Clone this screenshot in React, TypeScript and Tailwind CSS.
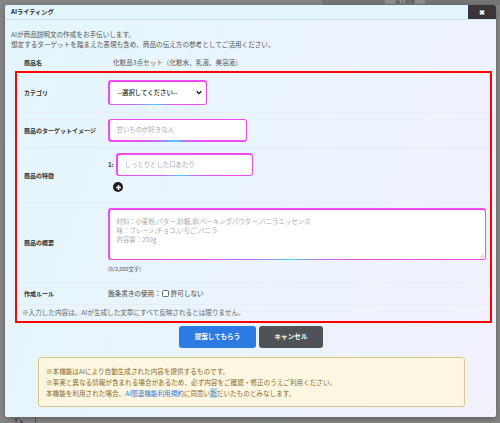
import React from "react";

const gradBorder =
  "bg-[conic-gradient(from_0deg,#f04af0_0deg,#f04af0_110deg,#b07cf8_150deg,#3fdcf0_195deg,#9a8cf6_230deg,#f04af0_260deg,#f04af0_360deg)] p-[1.5px] rounded-[3px]";

export default function App() {
  return (
    <div className="relative w-[500px] h-[423px] overflow-hidden bg-[#868686] font-['Noto_Sans_CJK_JP','Noto_Sans',sans-serif]">
      {/* page behind the overlay */}
      <div className="absolute left-[322px] top-0 w-[178px] h-[5px] bg-[#767676]" />
      <div className="absolute left-[385px] top-[-3px] w-[40px] h-[7px] bg-[#8e8e8e] text-[5px] text-[#444] text-center leading-[7px]">
        施工画像
      </div>
      <div className="absolute left-[35px] top-[417px] w-px h-[6px] bg-[#5a5a5a]" />
      <div className="absolute left-[14px] top-[417px] text-[6px] font-bold text-[#2a2a2a] leading-[8px]">
        ﾌﾟﾚ
      </div>

      {/* modal */}
      <div className="absolute left-[5px] top-[5px] w-[491px] h-[412px] flex flex-col shadow-[0_2px_6px_rgba(0,0,0,0.3)] rounded-[2px] overflow-hidden">
        <div className="h-[15px] shrink-0 flex items-stretch justify-between bg-[#e2f5fc] border-b border-[#cfe0e6]">
          <div className="pl-[6px] flex items-center text-[6.2px] font-bold text-[#222]">
            AIライティング
          </div>
          <div className="w-[28px] bg-[#3b3539] flex items-center justify-center text-white text-[7px] font-bold leading-none">
            ✖
          </div>
        </div>

        <div className="flex-1 flex flex-col bg-[linear-gradient(110deg,#e3f6fc_0%,#eaf4fc_45%,#f1f1fc_100%)] pl-[6px] pr-[4px]">
          <div className="pt-[9px] text-[6.6px] leading-[10px] text-[#555]">
            <div>AIが商品説明文の作成をお手伝いします。</div>
            <div>想定するターゲットを踏まえた表現も含め、商品の伝え方の参考としてご活用ください。</div>
          </div>

          <div className="mt-[7px] ml-[4px] h-[13px] flex items-center">
            <div className="w-[98px] pl-[9px] text-[6px] font-bold text-[#333]">商品名</div>
            <div className="text-[6.6px] text-[#555]">化粧品3点セット（化粧水、乳液、美容液）</div>
          </div>

          <div className="mt-[2px] ml-[4px] border-2 border-[#ff0000] flex flex-col">
            {/* category */}
            <div className="h-[40px] flex items-center border-b border-[#e6edf3]">
              <div className="w-[91px] pl-[7px] text-[6px] font-bold text-[#333]">カテゴリ</div>
              <div className={`${gradBorder} w-[99px] h-[25px]`}>
                <div className="w-full h-full bg-white rounded-[2px] flex items-center justify-between pl-[8px] pr-[4px]">
                  <span className="text-[6.4px] font-medium text-[#222]">--選択してください--</span>
                  <svg width="6" height="5" viewBox="0 0 6 5">
                    <path d="M0.8 1.2 L3 3.6 L5.2 1.2" fill="none" stroke="#111" strokeWidth="1.3" />
                  </svg>
                </div>
              </div>
            </div>

            {/* target */}
            <div className="h-[35px] flex items-center border-b border-[#e6edf3]">
              <div className="w-[91px] pl-[7px] text-[6px] font-bold text-[#333]">商品のターゲットイメージ</div>
              <div className={`${gradBorder} w-[139px] h-[23px]`}>
                <div className="w-full h-full bg-white rounded-[2px] flex items-center pl-[7px] text-[6.4px] text-[#aaa]">
                  甘いものが好きな人
                </div>
              </div>
            </div>

            {/* features */}
            <div className="h-[55px] flex items-center border-b border-[#e6edf3]">
              <div className="w-[91px] pl-[7px] text-[6px] font-bold text-[#333]">商品の特徴</div>
              <div className="flex flex-col self-start pt-[5px]">
                <div className="flex items-center">
                  <span className="w-[8px] text-[6px] font-bold text-[#333]">1:</span>
                  <div className={`${gradBorder} w-[137px] h-[23px]`}>
                    <div className="w-full h-full bg-white rounded-[2px] flex items-center pl-[7px] text-[6.4px] text-[#aaa]">
                      しっとりとした口あたり
                    </div>
                  </div>
                </div>
                <div className="mt-[6px] ml-[5px] w-[10px] h-[10px] rounded-full bg-[#1e1e1e] flex items-center justify-center">
                  <svg width="7" height="7" viewBox="0 0 7 7">
                    <path d="M3.5 1 V6 M1 3.5 H6" stroke="#fff" strokeWidth="1.6" />
                  </svg>
                </div>
              </div>
            </div>

            {/* summary */}
            <div className="h-[80px] flex items-center border-b border-[#e6edf3]">
              <div className="w-[91px] pl-[7px] text-[6px] font-bold text-[#333]">商品の概要</div>
              <div className="flex flex-col self-start pt-[5px]">
                <div className={`${gradBorder} w-[378px] h-[52px]`}>
                  <div className="relative w-full h-full bg-white rounded-[2px] pl-[7px] pt-[7px] text-[6.4px] leading-[9px] text-[#aaa]">
                    <div>材料：小麦粉,バター,砂糖,卵,ベーキングパウダー,バニラエッセンス</div>
                    <div>味：プレーン,チョコ,いちご,バニラ</div>
                    <div>内容量：250g</div>
                    <svg className="absolute right-[1px] bottom-[1px]" width="4" height="4" viewBox="0 0 4 4">
                      <path d="M3.5 0.5 L0.5 3.5 M3.5 2 L2 3.5" stroke="#999" strokeWidth="0.6" />
                    </svg>
                  </div>
                </div>
                <div className="mt-[5px] text-[5.4px] text-[#555]">(0/2,000文字)</div>
              </div>
            </div>

            {/* rule */}
            <div className="h-[22px] flex items-center border-b border-[#e6edf3]">
              <div className="w-[91px] pl-[7px] text-[6px] font-bold text-[#333]">作成ルール</div>
              <div className="flex items-center text-[6.6px] text-[#444]">
                <span>箇条書きの使用：</span>
                <span className="ml-[1px] w-[7px] h-[7px] rounded-[1.5px] border border-[#666] bg-white" />
                <span className="ml-[2px]">許可しない</span>
              </div>
            </div>

            <div className="h-[16px] flex items-center pl-[5px] text-[6.6px] text-[#666]">
              ※入力した内容は、AIが生成した文章にすべて反映されるとは限りません。
            </div>
          </div>

          <div className="mt-[3px] flex justify-center gap-[3px] pr-[1px]">
            <div className="w-[77px] h-[22px] rounded-[3px] bg-[#2b7be3] flex items-center justify-center text-[6.6px] font-bold text-white">
              提案してもらう
            </div>
            <div className="w-[64px] h-[22px] rounded-[3px] bg-[#4f5355] flex items-center justify-center text-[6.6px] font-bold text-white">
              キャンセル
            </div>
          </div>

          <div className="mt-[9px] self-center w-[427px] h-[50px] rounded-[3px] border border-[#d6c68e] bg-[#fdf7e1] pl-[7px] pt-[8px] text-[6.6px] leading-[11px] text-[#8a6a2a]">
            <div>※本機能はAIにより自動生成された内容を提供するものです。</div>
            <div>※事実と異なる情報が含まれる場合があるため、必ず内容をご確認・修正のうえご利用ください。</div>
            <div>
              本機能を利用された場合、<span className="text-[#3b78d8]">AI関連機能利用規約</span>に同意い
              <span className="bg-[#b5d5ef]">た</span>だいたものとみなします。
            </div>
          </div>
        </div>
      </div>
    </div>
  );
}
